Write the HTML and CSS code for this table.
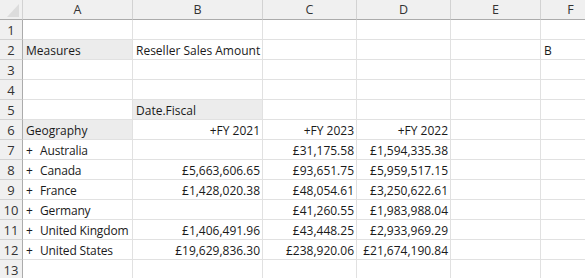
FILE: index.html
```html
<!DOCTYPE html>
<html>
<head>
<meta charset="utf-8">
<link rel="stylesheet" href="styles.css">
</head>
<body>
<div class="sheet">
  <div class="corner"><span class="tri"></span></div>
  <div class="ch">A</div><div class="ch">B</div><div class="ch">C</div><div class="ch">D</div><div class="ch">E</div><div class="ch">F</div>

  <div class="rh">1</div><div class="c"></div><div class="c"></div><div class="c"></div><div class="c"></div><div class="c"></div><div class="c"></div>

  <div class="rh">2</div><div class="c fill">Measures</div><div class="c">Reseller Sales Amount</div><div class="c"></div><div class="c"></div><div class="c"></div><div class="c">B</div>

  <div class="rh">3</div><div class="c"></div><div class="c"></div><div class="c"></div><div class="c"></div><div class="c"></div><div class="c"></div>

  <div class="rh">4</div><div class="c"></div><div class="c"></div><div class="c"></div><div class="c"></div><div class="c"></div><div class="c"></div>

  <div class="rh">5</div><div class="c"></div><div class="c fill">Date.Fiscal</div><div class="c"></div><div class="c"></div><div class="c"></div><div class="c"></div>

  <div class="rh">6</div><div class="c fill">Geography</div><div class="c num">+FY 2021</div><div class="c num">+FY 2023</div><div class="c num">+FY 2022</div><div class="c"></div><div class="c"></div>

  <div class="rh">7</div><div class="c"><span class="plus">+</span><span class="name">Australia</span></div><div class="c num"></div><div class="c num">£31,175.58</div><div class="c num">£1,594,335.38</div><div class="c"></div><div class="c"></div>

  <div class="rh">8</div><div class="c"><span class="plus">+</span><span class="name">Canada</span></div><div class="c num">£5,663,606.65</div><div class="c num">£93,651.75</div><div class="c num">£5,959,517.15</div><div class="c"></div><div class="c"></div>

  <div class="rh">9</div><div class="c"><span class="plus">+</span><span class="name">France</span></div><div class="c num">£1,428,020.38</div><div class="c num">£48,054.61</div><div class="c num">£3,250,622.61</div><div class="c"></div><div class="c"></div>

  <div class="rh">10</div><div class="c"><span class="plus">+</span><span class="name">Germany</span></div><div class="c num"></div><div class="c num">£41,260.55</div><div class="c num">£1,983,988.04</div><div class="c"></div><div class="c"></div>

  <div class="rh">11</div><div class="c"><span class="plus">+</span><span class="name">United Kingdom</span></div><div class="c num">£1,406,491.96</div><div class="c num">£43,448.25</div><div class="c num">£2,933,969.29</div><div class="c"></div><div class="c"></div>

  <div class="rh">12</div><div class="c"><span class="plus">+</span><span class="name">United States</span></div><div class="c num">£19,629,836.30</div><div class="c num">£238,920.06</div><div class="c num">£21,674,190.84</div><div class="c"></div><div class="c"></div>

  <div class="rh">13</div><div class="c"></div><div class="c"></div><div class="c"></div><div class="c"></div><div class="c"></div><div class="c"></div>
</div>
</body>
</html>
```

FILE: styles.css
```css
html, body {
  margin: 0;
  padding: 0;
  background: #ffffff;
  overflow: hidden;
}

.sheet {
  display: grid;
  grid-template-columns: 23px 110px 130px 94px 94px 90px 60px;
  grid-auto-rows: 20px;
  font-family: "Open Sans", "Noto Sans", sans-serif;
  font-size: 12px;
  color: #1a1a1a;
}

.sheet > div {
  box-sizing: border-box;
  white-space: nowrap;
  overflow: hidden;
  line-height: 19px;
}

.corner {
  background: #f0f0f0;
  border-right: 1px solid #d2d2d2;
  border-bottom: 1px solid #ababab;
  position: relative;
}

.tri {
  position: absolute;
  left: 7px;
  top: 4px;
  width: 0;
  height: 0;
  border-left: 12px solid transparent;
  border-bottom: 13px solid #dcdcdc;
}

.ch {
  background: #f0f0f0;
  border-right: 1px solid #d2d2d2;
  border-bottom: 1px solid #ababab;
  text-align: center;
  color: #333333;
  font-size: 12.5px;
}

.rh {
  background: #f0f0f0;
  border-right: 1px solid #ababab;
  border-bottom: 1px solid #d2d2d2;
  text-align: center;
  color: #333333;
  font-size: 13px;
  padding-top: 1px;
}

.c {
  border-right: 1px solid #e1e1e1;
  border-bottom: 1px solid #e1e1e1;
  padding: 1px 3px 0 3px;
}

.fill {
  background: #ececec;
}

.num {
  text-align: right;
  padding-right: 2px;
}

.plus {
  display: inline-block;
  width: 14px;
}

.name {
  letter-spacing: -0.15px;
}
```
